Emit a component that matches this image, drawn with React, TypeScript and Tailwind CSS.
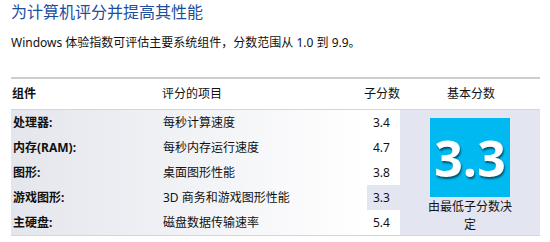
import React from 'react';

const rows = [
    { name: '处理器:', item: '每秒计算速度', score: '3.4', low: false },
    { name: '内存(RAM):', item: '每秒内存运行速度', score: '4.7', low: false },
    { name: '图形:', item: '桌面图形性能', score: '3.8', low: false },
    { name: '游戏图形:', item: '3D 商务和游戏图形性能', score: '3.3', low: true },
    { name: '主硬盘:', item: '磁盘数据传输速率', score: '5.4', low: false },
];

const ScoreRow: React.FC<{ name: string; item: string; score: string; low: boolean }> = ({ name, item, score, low }) => (
    <div className="flex h-[25px]">
        <div className="flex w-[356px] items-center bg-gradient-to-r from-[#e4e6ed] to-[#ffffff]">
            <span className="w-[151px] pl-[2px] font-bold">{name}</span>
            <span className="w-[205px] pl-[1px]">{item}</span>
        </div>
        <div className={`flex w-[33px] items-center pl-[6px] ${low ? 'bg-[#e3e5f0]' : 'bg-white'}`}>{score}</div>
    </div>
);

export default function App() {
    return (
        <div className="h-[242px] w-[550px] overflow-hidden bg-white pl-[11px] text-[12px] leading-[16px] text-[#111] font-['Noto_Sans','Noto_Sans_CJK_SC',sans-serif]">
            <h1 className="pt-[1px] text-[16px] leading-[22px] text-[#1d4e9e]">为计算机评分并提高其性能</h1>
            <p className="mt-[12px]">Windows 体验指数可评估主要系统组件，分数范围从 1.0 到 9.9。</p>

            <div className="mt-[26px] w-[529px] border-t-2 border-[#cdcdcd]">
                <div className="flex h-[31px] items-center border-b border-[#d6d6d6]">
                    <span className="w-[151px] pl-[1px] font-bold">组件</span>
                    <span className="w-[205px]">评分的项目</span>
                    <span className="flex w-[33px] justify-end whitespace-nowrap">子分数</span>
                    <span className="w-[140px] pl-[47px]">基本分数</span>
                </div>
                <div className="flex border-b border-[#d6d6d6]">
                    <div className="w-[389px]">
                        {rows.map(r => (
                            <ScoreRow key={r.name} {...r} />
                        ))}
                    </div>
                    <div className="w-[140px] bg-[#e3e5f0] pt-[8px]">
                        <div className="mx-auto flex h-[79px] w-[80px] items-center justify-center bg-[#00b9f1]">
                            <span className="text-[50px] font-bold leading-none text-white font-['Open_Sans',sans-serif] [text-shadow:1px_2px_2px_rgba(0,0,0,0.55)]">
                                3.3
                            </span>
                        </div>
                        <p className="mt-[1px] whitespace-nowrap text-center leading-[18px]">
                            由最低子分数决
                            <br />
                            定
                        </p>
                    </div>
                </div>
            </div>
        </div>
    );
}
